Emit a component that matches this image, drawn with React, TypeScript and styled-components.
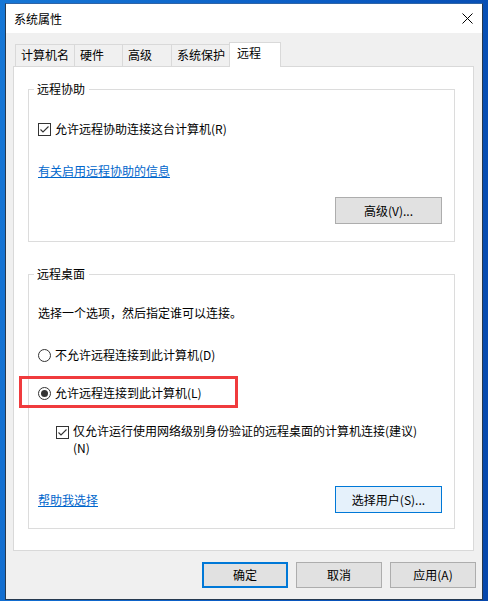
import React from 'react';
import styled, { createGlobalStyle } from 'styled-components';

const GlobalStyle = createGlobalStyle`
  html, body { margin: 0; padding: 0; }
  body {
    font-family: "Noto Sans CJK SC", "Noto Sans", sans-serif;
    font-size: 12px;
    color: #000;
  }
`;

const Desktop = styled.div`
  width: 488px;
  height: 601px;
  box-sizing: border-box;
  padding: 3px 5px 0 5px;
  background: linear-gradient(100deg, #1677d6 0%, #0a5cc4 55%, #0647ab 100%);
  overflow: hidden;
`;

const Window = styled.div`
  width: 478px;
  height: 597px;
  box-sizing: border-box;
  border: 1px solid #26394e;
  border-top-color: #2f64a6;
  background: #f0f0f0;
  display: flex;
  flex-direction: column;
`;

const TitleBar = styled.div`
  height: 29px;
  flex: none;
  background: #fff;
  display: flex;
  align-items: center;
  justify-content: space-between;
  padding: 0 9px 0 8px;
`;

const TitleText = styled.span`
  line-height: 16px;
  margin-top: 1px;
`;

const CloseIcon = styled.svg`
  width: 11px;
  height: 11px;
  display: block;
  margin-top: -1px;
`;

const Body = styled.div`
  flex: 1;
  display: flex;
  flex-direction: column;
  padding: 9px 6px 11px 7px;
`;

const TabStrip = styled.div`
  display: flex;
  align-items: flex-end;
  height: 24px;
  padding-left: 2px;
  flex: none;
`;

const Tab = styled.div<{ $w: number; $active?: boolean }>`
  position: relative;
  z-index: ${(p) => (p.$active ? 2 : 1)};
  box-sizing: border-box;
  width: ${(p) => p.$w}px;
  height: ${(p) => (p.$active ? 25 : 22)}px;
  margin-bottom: ${(p) => (p.$active ? -1 : 0)}px;
  margin-right: -1px;
  border: 1px solid #d9d9d9;
  border-bottom: none;
  background: ${(p) => (p.$active ? '#fff' : '#f0f0f0')};
  padding: 2px 0 0 ${(p) => (p.$active ? 7 : 5)}px;
  line-height: 16px;
  white-space: nowrap;
`;

const Panel = styled.div`
  height: 485px;
  box-sizing: border-box;
  margin-right: 2px;
  background: #fff;
  border: 1px solid #d9d9d9;
  padding: 22px 18px 0 14px;
  display: flex;
  flex-direction: column;
  flex: none;
`;

const Group = styled.div<{ $h: number; $pt: number; $mt?: number }>`
  position: relative;
  box-sizing: border-box;
  height: ${(p) => p.$h}px;
  margin-top: ${(p) => p.$mt ?? 0}px;
  border: 1px solid #dcdcdc;
  padding: ${(p) => p.$pt}px 12px 0 9px;
  display: flex;
  flex-direction: column;
  align-items: stretch;
  flex: none;
`;

const Legend = styled.span`
  position: absolute;
  top: -9px;
  left: 5px;
  padding: 0 4px 0 3px;
  background: #fff;
  line-height: 16px;
`;

const Row = styled.div<{ $mt?: number; $indent?: number }>`
  position: relative;
  display: flex;
  align-items: flex-start;
  gap: 4px;
  margin-top: ${(p) => p.$mt ?? 0}px;
  margin-left: ${(p) => p.$indent ?? 0}px;
  line-height: 16px;
`;

const Label = styled.span<{ $lh?: number }>`
  line-height: ${(p) => p.$lh ?? 16}px;
`;

const Box = styled.span<{ $top?: number }>`
  flex: none;
  box-sizing: border-box;
  width: 13px;
  height: 13px;
  margin-top: ${(p) => p.$top ?? 2}px;
  border: 1px solid #333;
  background: #fff;
  display: flex;
  align-items: center;
  justify-content: center;
`;

const Radio = styled.span<{ $checked?: boolean }>`
  flex: none;
  box-sizing: border-box;
  width: 13px;
  height: 13px;
  margin-top: 2px;
  border: 1px solid #333;
  border-radius: 50%;
  background: #fff;
  display: flex;
  align-items: center;
  justify-content: center;
  &::after {
    content: '';
    display: ${(p) => (p.$checked ? 'block' : 'none')};
    width: 7px;
    height: 7px;
    border-radius: 50%;
    background: #333;
  }
`;

const Highlight = styled.span`
  position: absolute;
  left: -19px;
  top: -9px;
  width: 219px;
  height: 32px;
  box-sizing: border-box;
  border: 3px solid #f03b3d;
  pointer-events: none;
`;

const Link = styled.a<{ $mt?: number }>`
  display: block;
  margin-top: ${(p) => p.$mt ?? 0}px;
  color: #0066cc;
  text-decoration: underline;
  line-height: 16px;
  cursor: pointer;
`;

const LinkRow = styled.div<{ $mt: number }>`
  display: flex;
  margin-top: ${(p) => p.$mt}px;
`;

const Button = styled.button<{ $w: number; $h: number; $kind?: 'normal' | 'default' | 'hot' }>`
  box-sizing: border-box;
  width: ${(p) => p.$w}px;
  height: ${(p) => p.$h}px;
  padding: 0;
  font-family: inherit;
  font-size: 12px;
  color: #000;
  background: ${(p) => (p.$kind === 'hot' ? '#e5f1fb' : '#e1e1e1')};
  border: ${(p) =>
    p.$kind === 'default'
      ? '2px solid #0078d7'
      : p.$kind === 'hot'
      ? '1px solid #0078d7'
      : '1px solid #adadad'};
  line-height: 16px;
`;

const RightRow = styled.div<{ $mt: number }>`
  display: flex;
  justify-content: flex-end;
  margin-top: ${(p) => p.$mt}px;
`;

const SplitRow = styled.div<{ $mt: number }>`
  display: flex;
  justify-content: space-between;
  align-items: center;
  margin-top: ${(p) => p.$mt}px;
`;

const Footer = styled.div`
  display: flex;
  justify-content: flex-end;
  gap: 8px;
  margin-top: 11px;
  flex: none;
`;

const Check = () => (
  <svg width="11" height="11" viewBox="0 0 11 11">
    <path d="M1.5 5.5 L4 8 L9.5 2.5" fill="none" stroke="#333" strokeWidth="1.1" />
  </svg>
);

const tabs = [
  { label: '计算机名', w: 60 },
  { label: '硬件', w: 49 },
  { label: '高级', w: 50 },
  { label: '系统保护', w: 59 },
  { label: '远程', w: 52, active: true },
];

export default function App() {
  return (
    <>
      <GlobalStyle />
      <Desktop>
        <Window>
          <TitleBar>
            <TitleText>系统属性</TitleText>
            <CloseIcon viewBox="0 0 11 11">
              <path d="M0.5 0.5 L10.5 10.5 M10.5 0.5 L0.5 10.5" stroke="#000" strokeWidth="1" />
            </CloseIcon>
          </TitleBar>
          <Body>
            <TabStrip>
              {tabs.map((t) => (
                <Tab key={t.label} $w={t.w} $active={t.active}>
                  {t.label}
                </Tab>
              ))}
            </TabStrip>
            <Panel>
              <Group $h={153} $pt={31}>
                <Legend>远程协助</Legend>
                <Row>
                  <Box>
                    <Check />
                  </Box>
                  <Label>允许远程协助连接这台计算机(R)</Label>
                </Row>
                <LinkRow $mt={26}>
                  <Link>有关启用远程协助的信息</Link>
                </LinkRow>
                <RightRow $mt={18}>
                  <Button $w={107} $h={27}>高级(V)...</Button>
                </RightRow>
              </Group>
              <Group $h={255} $pt={30} $mt={32}>
                <Legend>远程桌面</Legend>
                <Row>
                  <Label>选择一个选项，然后指定谁可以连接。</Label>
                </Row>
                <Row $mt={26}>
                  <Radio />
                  <Label>不允许远程连接到此计算机(D)</Label>
                </Row>
                <Row $mt={22}>
                  <Highlight />
                  <Radio $checked />
                  <Label>允许远程连接到此计算机(L)</Label>
                </Row>
                <Row $mt={21} $indent={18}>
                  <Box $top={4}>
                    <Check />
                  </Box>
                  <Label $lh={17}>
                    仅允许运行使用网络级别身份验证的远程桌面的计算机连接(建议)
                    <br />
                    (N)
                  </Label>
                </Row>
                <SplitRow $mt={30}>
                  <Link>帮助我选择</Link>
                  <Button $w={107} $h={27} $kind="hot">选择用户(S)...</Button>
                </SplitRow>
              </Group>
            </Panel>
            <Footer>
              <Button $w={86} $h={26} $kind="default">确定</Button>
              <Button $w={86} $h={26}>取消</Button>
              <Button $w={86} $h={26}>应用(A)</Button>
            </Footer>
          </Body>
        </Window>
      </Desktop>
    </>
  );
}
